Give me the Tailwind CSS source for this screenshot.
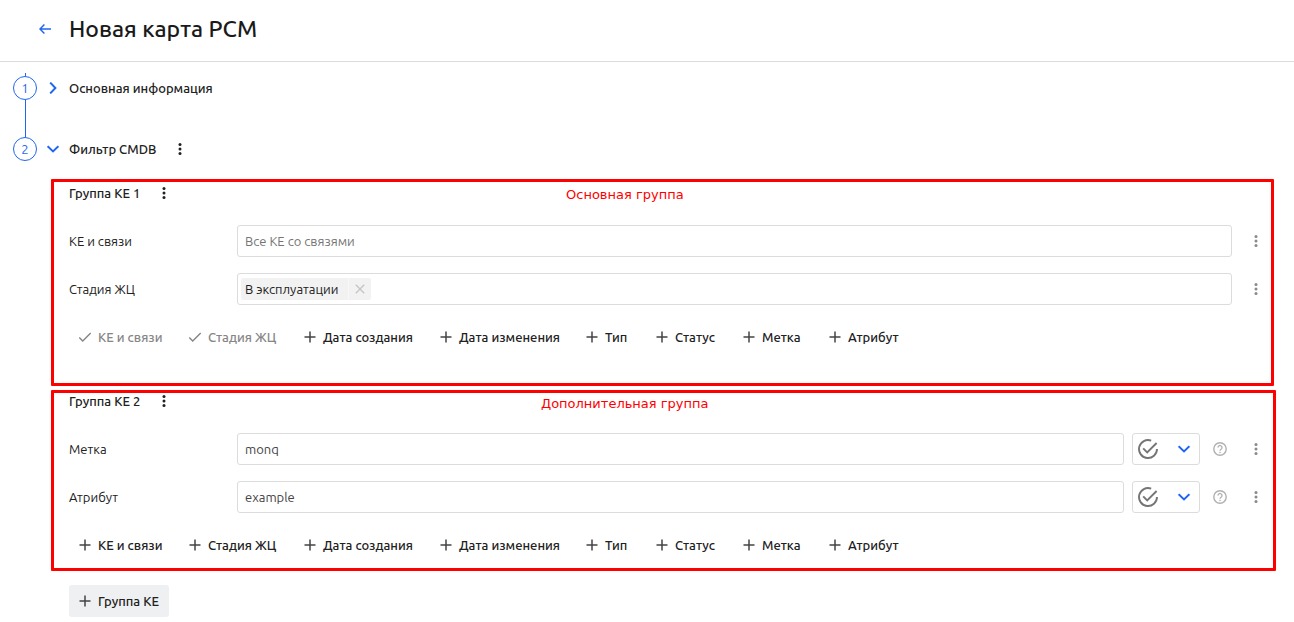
<!DOCTYPE html>
<html lang="ru">

<head>
	<meta charset="UTF-8" />
	<meta name="viewport" content="width=device-width, initial-scale=1.0" />
	<title>Новая карта РСМ</title>
	<script src="https://cdn.jsdelivr.net/npm/@tailwindcss/browser@4"></script>
</head>

<body class="bg-white font-['Ubuntu','Noto_Sans',sans-serif] text-[13px] leading-[19px] text-[#212121]">
	<!-- Icon sprite -->
	<svg class="hidden">
		<symbol id="plus" viewBox="0 0 12 12"><path d="M6 .5v11M.5 6h11" fill="none" stroke="#444" stroke-width="1.5" /></symbol>
		<symbol id="check" viewBox="0 0 12 12"><path d="M.3 6.5l3.4 3.6L11.7 2" fill="none" stroke="currentColor" stroke-width="1.4" /></symbol>
		<symbol id="dots" viewBox="0 0 4 14"><g fill="currentColor"><circle cx="2" cy="2.5" r="1.5" /><circle cx="2" cy="7" r="1.5" /><circle cx="2" cy="11.5" r="1.5" /></g></symbol>
		<symbol id="chevron" viewBox="0 0 12 12"><path d="M.6 3.200L6 8.400l5.400-5.200" fill="none" stroke="currentColor" stroke-width="2" /></symbol>
		<symbol id="close" viewBox="0 0 10 10"><path d="M.8.8l8.4 8.4M9.2.8L.8 9.2" fill="none" stroke="currentColor" stroke-width="1.3" /></symbol>
		<symbol id="done" viewBox="0 0 20 20"><g fill="none" stroke="currentColor" stroke-width="1.9"><path d="M13.2 1.6A9 9 0 1 0 19 10" /><path d="M5.2 9.4l4 4L18.6 4" /></g></symbol>
		<symbol id="help" viewBox="0 0 14 14"><circle cx="7" cy="7" r="6.200" fill="none" stroke="currentColor" stroke-width="1.400" /><path d="M5 5.500a2 2 0 1 1 3.200 1.600C7.500 7.600 7 7.900 7 8.800" fill="none" stroke="currentColor" stroke-width="1.300" /><circle cx="7" cy="10.500" r=".8" fill="currentColor" /></symbol>
	</svg>

	<header class="flex h-[62px] items-center gap-4 border-b border-[#dcdcdc] pb-1 pl-[37px]">
		<a href="#" aria-label="Назад" class="flex w-4 justify-center text-[#1f66f0]">
			<svg class="h-3 w-3" viewBox="0 0 12 12"><path d="M12 6H1.200M5.400 1.500L1 6l4.400 4.500" fill="none" stroke="currentColor" stroke-width="1.500" /></svg>
		</a>
		<h1 class="text-[23px] leading-[31px] font-medium text-[#1a1a1a]">Новая карта РСМ</h1>
	</header>

	<main class="pt-[10px]">
		<!-- Steps -->
		<div class="flex pl-[13px]">
			<div class="flex h-[65px] w-6 flex-col">
				<span class="mt-px ml-3 h-[3px] w-px bg-[#1f66f0]"></span>
				<span class="flex h-6 w-6 items-center justify-center rounded-full border border-[#1f66f0] text-[#1f66f0]">1</span>
				<span class="ml-3 w-px flex-1 bg-[#1f66f0]"></span>
			</div>
			<button class="flex h-8 items-center gap-[10px] pl-[10px] font-medium">
				<svg class="h-3 w-3 -rotate-90 text-[#1f66f0]"><use href="#chevron" /></svg>
				Основная информация
			</button>
		</div>
		<div class="mb-4 flex h-6 items-center pl-[13px]">
			<span class="flex h-6 w-6 items-center justify-center rounded-full border border-[#1f66f0] text-[#1f66f0]">2</span>
			<button class="flex items-center gap-[10px] pl-[10px] font-medium">
				<svg class="h-3 w-3 text-[#1f66f0]"><use href="#chevron" /></svg>
				Фильтр CMDB
			</button>
			<button aria-label="Меню фильтра" class="ml-3 flex w-6 justify-center"><svg class="h-[14px] w-1"><use href="#dots" /></svg></button>
		</div>

		<!-- Group 1 -->
		<section class="relative mb-8 flex flex-col gap-4 pr-[26px] pl-[69px]">
			<div class="flex h-8 items-center gap-3">
				<h2 class="font-medium">Группа КЕ 1</h2>
				<button aria-label="Меню группы 1" class="flex w-6 justify-center"><svg class="h-[14px] w-1"><use href="#dots" /></svg></button>
			</div>
			<div class="flex h-8 items-center">
				<label for="ke" class="w-[168px]">КЕ и связи</label>
				<input id="ke" type="text" placeholder="Все КЕ со связями" class="h-8 min-w-0 flex-1 rounded-[3px] border border-[#dcdcdc] px-[7px] placeholder:text-[#757575]" />
				<button aria-label="Меню поля" class="ml-3 flex w-6 justify-center text-[#8a8a8a]"><svg class="h-[14px] w-1"><use href="#dots" /></svg></button>
			</div>
			<div class="flex h-8 items-center">
				<label for="stage" class="w-[168px]">Стадия ЖЦ</label>
				<div class="flex h-8 min-w-0 flex-1 items-center rounded-[3px] border border-[#dcdcdc] pl-[3px]">
					<span class="flex h-[22px] items-center rounded-[2px] bg-[#f2f2f2] pl-1">
						В эксплуатации
						<button aria-label="Убрать" class="ml-[10px] flex h-[22px] w-[23px] items-center justify-center border-l border-[#f8f8f8] text-[#c4c4c4]"><svg class="h-[10px] w-[10px]"><use href="#close" /></svg></button>
					</span>
					<input id="stage" type="text" class="h-6 min-w-0 flex-1 px-2 outline-none" />
				</div>
				<button aria-label="Меню поля" class="ml-3 flex w-6 justify-center text-[#8a8a8a]"><svg class="h-[14px] w-1"><use href="#dots" /></svg></button>
			</div>
			<div class="grid h-8 grid-cols-[110px_115px_136px_146px_70px_87px_86px_auto] justify-start font-medium whitespace-nowrap">
				<button disabled class="flex items-center gap-[7px] pl-[10px] text-[#868686]"><svg class="h-3 w-3"><use href="#check" /></svg>КЕ и связи</button>
				<button disabled class="flex items-center gap-[7px] pl-[10px] text-[#868686]"><svg class="h-3 w-3"><use href="#check" /></svg>Стадия ЖЦ</button>
				<button class="flex items-center gap-[7px] pl-[10px]"><svg class="h-3 w-3"><use href="#plus" /></svg>Дата создания</button>
				<button class="flex items-center gap-[7px] pl-[10px]"><svg class="h-3 w-3"><use href="#plus" /></svg>Дата изменения</button>
				<button class="flex items-center gap-[7px] pl-[10px]"><svg class="h-3 w-3"><use href="#plus" /></svg>Тип</button>
				<button class="flex items-center gap-[7px] pl-[10px]"><svg class="h-3 w-3"><use href="#plus" /></svg>Статус</button>
				<button class="flex items-center gap-[7px] pl-[10px]"><svg class="h-3 w-3"><use href="#plus" /></svg>Метка</button>
				<button class="flex items-center gap-[7px] pl-[10px]"><svg class="h-3 w-3"><use href="#plus" /></svg>Атрибут</button>
			</div>
			<!-- Callout frame -->
			<div class="pointer-events-none absolute top-[2px] right-5 -bottom-[33px] left-[51px] rounded-[1px] border-3 border-[#ff0000]">
				<p class="absolute top-[3px] left-[512px] font-['DejaVu_Sans',sans-serif] text-[#ff0000]">Основная группа</p>
			</div>
		</section>

		<!-- Group 2 -->
		<section class="relative mb-6 flex flex-col gap-4 pr-[26px] pl-[69px]">
			<div class="flex h-8 items-center gap-3">
				<h2 class="font-medium">Группа КЕ 2</h2>
				<button aria-label="Меню группы 2" class="flex w-6 justify-center"><svg class="h-[14px] w-1"><use href="#dots" /></svg></button>
			</div>
			<div class="flex h-8 items-center">
				<label for="tag" class="w-[168px]">Метка</label>
				<input id="tag" type="text" value="monq" class="h-8 min-w-0 flex-1 rounded-[3px] border border-[#dcdcdc] px-[7px] text-[#444]" />
				<div class="relative ml-2 h-8 w-[68px]">
					<select aria-label="Условие для метки" class="h-8 w-full appearance-none rounded-[3px] border border-[#dcdcdc]"><option></option></select>
					<svg class="pointer-events-none absolute top-[6px] left-[6px] h-5 w-5 text-[#757575]"><use href="#done" /></svg>
					<svg class="pointer-events-none absolute top-[10px] right-[10px] h-3 w-3 text-[#1f66f0]"><use href="#chevron" /></svg>
				</div>
				<button aria-label="Справка" class="ml-2 flex w-6 justify-center text-[#b0b0b0]"><svg class="h-[14px] w-[14px]"><use href="#help" /></svg></button>
				<button aria-label="Меню поля" class="ml-3 flex w-6 justify-center text-[#8a8a8a]"><svg class="h-[14px] w-1"><use href="#dots" /></svg></button>
			</div>
			<div class="flex h-8 items-center">
				<label for="attr" class="w-[168px]">Атрибут</label>
				<input id="attr" type="text" value="example" class="h-8 min-w-0 flex-1 rounded-[3px] border border-[#dcdcdc] px-[7px] text-[#444]" />
				<div class="relative ml-2 h-8 w-[68px]">
					<select aria-label="Условие для атрибута" class="h-8 w-full appearance-none rounded-[3px] border border-[#dcdcdc]"><option></option></select>
					<svg class="pointer-events-none absolute top-[6px] left-[6px] h-5 w-5 text-[#757575]"><use href="#done" /></svg>
					<svg class="pointer-events-none absolute top-[10px] right-[10px] h-3 w-3 text-[#1f66f0]"><use href="#chevron" /></svg>
				</div>
				<button aria-label="Справка" class="ml-2 flex w-6 justify-center text-[#b0b0b0]"><svg class="h-[14px] w-[14px]"><use href="#help" /></svg></button>
				<button aria-label="Меню поля" class="ml-3 flex w-6 justify-center text-[#8a8a8a]"><svg class="h-[14px] w-1"><use href="#dots" /></svg></button>
			</div>
			<div class="grid h-8 grid-cols-[110px_115px_136px_146px_70px_87px_86px_auto] justify-start font-medium whitespace-nowrap">
				<button class="flex items-center gap-[7px] pl-[10px]"><svg class="h-3 w-3"><use href="#plus" /></svg>КЕ и связи</button>
				<button class="flex items-center gap-[7px] pl-[10px]"><svg class="h-3 w-3"><use href="#plus" /></svg>Стадия ЖЦ</button>
				<button class="flex items-center gap-[7px] pl-[10px]"><svg class="h-3 w-3"><use href="#plus" /></svg>Дата создания</button>
				<button class="flex items-center gap-[7px] pl-[10px]"><svg class="h-3 w-3"><use href="#plus" /></svg>Дата изменения</button>
				<button class="flex items-center gap-[7px] pl-[10px]"><svg class="h-3 w-3"><use href="#plus" /></svg>Тип</button>
				<button class="flex items-center gap-[7px] pl-[10px]"><svg class="h-3 w-3"><use href="#plus" /></svg>Статус</button>
				<button class="flex items-center gap-[7px] pl-[10px]"><svg class="h-3 w-3"><use href="#plus" /></svg>Метка</button>
				<button class="flex items-center gap-[7px] pl-[10px]"><svg class="h-3 w-3"><use href="#plus" /></svg>Атрибут</button>
			</div>
			<!-- Callout frame -->
			<div class="pointer-events-none absolute top-[5px] right-[18px] -bottom-[10px] left-[51px] rounded-[1px] border-3 border-[#ff0000]">
				<p class="absolute top-px left-[487px] font-['DejaVu_Sans',sans-serif] text-[#ff0000]">Дополнительная группа</p>
			</div>
		</section>

		<button class="ml-[69px] flex h-8 items-center gap-[7px] rounded-[3px] bg-[#eff0f2] px-[10px] font-medium"><svg class="h-3 w-3"><use href="#plus" /></svg>Группа КЕ</button>
	</main>
</body>

</html>
